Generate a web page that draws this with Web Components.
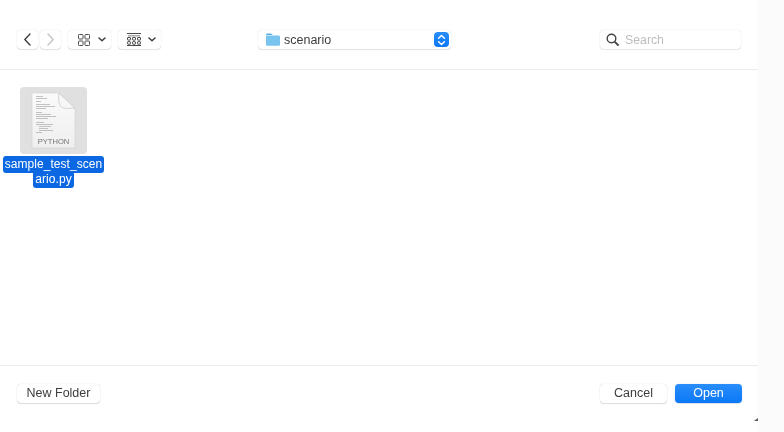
<!DOCTYPE html>
<html>
<head>
<meta charset="utf-8">
<style>
  html, body { margin: 0; padding: 0; width: 784px; height: 432px; overflow: hidden; background: #fff; }
  body { font-family: "Liberation Sans", Arial, sans-serif; color: #3c3c3c; }
</style>
</head>
<body>
<open-dialog></open-dialog>

<template id="tool-button-tpl">
  <style>
    :host {
      display: flex;
      align-items: center;
      justify-content: center;
      gap: var(--gap, 0);
      box-sizing: border-box;
      height: 19px;
      width: var(--w, 20px);
      padding-left: var(--pad, 0);
      background: #fff;
      border-radius: 4px;
      box-shadow: 0 0 1px rgba(0,0,0,.22), 0 1px 1px rgba(0,0,0,.1);
    }
    ::slotted(svg) { display: block; }
  </style>
  <slot></slot>
</template>

<template id="action-button-tpl">
  <style>
    :host {
      display: flex;
      align-items: center;
      justify-content: center;
      box-sizing: border-box;
      height: 19px;
      width: var(--w, 67px);
      padding-bottom: 1px;
      border-radius: 4px;
      background: #fff;
      color: #3d3d3d;
      font: 12.5px "Liberation Sans", Arial, sans-serif;
      box-shadow: 0 0 1px rgba(0,0,0,.24), 0 1px 1px rgba(0,0,0,.12);
    }
    :host([primary]) {
      background: linear-gradient(#2a8dfb, #0a78f5);
      color: #fff;
      box-shadow: 0 0 1px rgba(0,80,200,.4), 0 1px 1px rgba(0,0,0,.1);
    }
  </style>
  <slot></slot>
</template>

<template id="path-popup-tpl">
  <style>
    :host {
      display: flex;
      align-items: center;
      box-sizing: border-box;
      width: 193px;
      height: 19px;
      margin-left: 97px;
      padding: 0 2px 0 8px;
      gap: 4px;
      background: #fff;
      border-radius: 4px;
      box-shadow: 0 0 1px rgba(0,0,0,.22), 0 1px 1px rgba(0,0,0,.1);
      font: 12.5px "Liberation Sans", Arial, sans-serif;
      color: #3d3d3d;
    }
    .name { flex: 1; }
    .stepper {
      width: 15px;
      height: 15px;
      border-radius: 4px;
      background: linear-gradient(#2a8dfb, #0a78f5);
      display: flex;
      align-items: center;
      justify-content: center;
    }
    svg { display: block; }
  </style>
  <svg width="14" height="13" viewBox="0 0 14 13">
    <path d="M0 2.200C0 1.200.6.6 1.500.6h3.200c.7 0 1 .2 1.400.7l.6.8H0z" fill="#5fb0e0"/>
    <path d="M0 2.600h12.600c.8 0 1.400.6 1.400 1.400v7.400c0 .9-.6 1.400-1.400 1.400H1.400C.6 12.800 0 12.300 0 11.400z" fill="#78c4ef"/>
  </svg>
  <span class="name"><slot></slot></span>
  <span class="stepper">
    <svg width="9" height="12" viewBox="0 0 9 12" fill="none" stroke="#fff" stroke-width="1.5" stroke-linecap="round" stroke-linejoin="round">
      <path d="M1.600 4.200 4.500 1.500l2.900 2.700M1.600 7.800l2.900 2.700 2.900-2.700"/>
    </svg>
  </span>
</template>

<template id="search-field-tpl">
  <style>
    :host {
      display: flex;
      align-items: center;
      box-sizing: border-box;
      width: 141px;
      height: 19px;
      margin-left: auto;
      padding-left: 6px;
      gap: 6px;
      background: #fff;
      border-radius: 4px;
      box-shadow: 0 0 1px rgba(0,0,0,.22), 0 1px 1px rgba(0,0,0,.08);
      font: 12.3px "Liberation Sans", Arial, sans-serif;
      color: #bdbdbd;
    }
    svg { display: block; }
  </style>
  <svg width="13" height="13" viewBox="0 0 13 13" fill="none" stroke="#444" stroke-width="1.4" stroke-linecap="round">
    <circle cx="5.500" cy="5.500" r="4.300"/>
    <path d="M8.800 8.800 12 12" stroke-width="1.800"/>
  </svg>
  <slot></slot>
</template>

<template id="file-item-tpl">
  <style>
    :host {
      display: flex;
      flex-direction: column;
      align-items: center;
      width: 103px;
    }
    .thumb {
      width: 67px;
      height: 67px;
      border-radius: 4px;
      background: #e0e0e0;
      display: flex;
      align-items: center;
      justify-content: center;
      margin-bottom: 3px;
    }
    .doc { display: block; }
    .label {
      width: 103px;
      text-align: center;
      word-break: break-all;
      font: 12px/15px "Liberation Sans", Arial, sans-serif;
      letter-spacing: .05px;
      color: #fff;
    }
    .label span {
      background: #0b68e2;
      border-radius: 3px;
      padding: 1px 2px 2px;
      -webkit-box-decoration-break: clone;
      box-decoration-break: clone;
    }
    .tag { font: 7.6px "Liberation Sans", Arial, sans-serif; fill: #757575; }
  </style>
  <div class="thumb">
    <svg class="doc" width="45" height="57" viewBox="0 0 45 57">
      <defs>
        <linearGradient id="sheet" x1="0" y1="0" x2="0" y2="1">
          <stop offset="0" stop-color="#fafafa"/>
          <stop offset="1" stop-color="#efefef"/>
        </linearGradient>
      </defs>
      <path d="M1 1h27l16 15v40H1z" fill="url(#sheet)" stroke="#d0d0d0" stroke-width=".6"/>
      <path d="M28 1c-1 7 0 12 2.500 14 3 2 8 1.500 13.500 1z" fill="#f6f6f6" stroke="#c4c4c4" stroke-width=".7"/>
      <g stroke="#aaa" stroke-width=".7">
        <path d="M5 4.500h7M5 6.500h11M5 9.500h5M5 12.500h14M5 14.500h19M5 16.500h10M5 20.500h6M5 22.500h15M5 24.500h20M5 26.500h12M5 30.500h8M5 32.500h17M8 34.500h12M8 36.500h9M8 38.500h14M5 40.500h6"/>
      </g>
      <text class="tag" x="22.500" y="52" text-anchor="middle">PYTHON</text>
    </svg>
  </div>
  <div class="label"><span><slot></slot></span></div>
</template>

<template id="open-dialog-tpl">
  <style>
    :host {
      display: flex;
      width: 784px;
      height: 432px;
      background: linear-gradient(to right, #fefefe, #fbfbfb);
    }
    .window {
      width: 758px;
      height: 432px;
      background: #fff;
      display: flex;
      flex-direction: column;
      position: relative;
      filter: blur(.3px);
    }
    .toolbar {
      box-sizing: border-box;
      height: 70px;
      padding: 30px 17px 0 17px;
      border-bottom: 1px solid #ececec;
      display: flex;
      align-items: flex-start;
    }
    .nav { display: flex; gap: 2px; }
    .left { display: flex; gap: 7px; }
    .files { flex: 1; padding: 17px 2px 0; }
    .footer {
      box-sizing: border-box;
      height: 67px;
      padding: 18px 16px 0 17px;
      border-top: 1px solid #ececec;
      display: flex;
      justify-content: space-between;
      align-items: flex-start;
    }
    .actions { display: flex; gap: 8px; }
    .grip { position: absolute; right: 0; bottom: 11px; }
    svg { display: block; }
  </style>
  <div class="window">
    <div class="toolbar">
      <div class="left">
        <div class="nav">
          <tool-button style="--w:21px">
            <svg width="9" height="13" viewBox="0 0 9 13" fill="none" stroke="#3f3f3f" stroke-width="1.4" stroke-linecap="round" stroke-linejoin="round"><path d="M7 1 1.800 6.500 7 12"/></svg>
          </tool-button>
          <tool-button style="--w:21px">
            <svg width="9" height="13" viewBox="0 0 9 13" fill="none" stroke="#c4c4c4" stroke-width="1.4" stroke-linecap="round" stroke-linejoin="round"><path d="M2 1l5.200 5.500L2 12"/></svg>
          </tool-button>
        </div>
        <tool-button style="--w:43px;--gap:8px;--pad:4px">
          <svg width="12" height="12" viewBox="0 0 12 12" fill="none" stroke="#4a4a4a" stroke-width="1"><rect x=".5" y=".5" width="4.500" height="4.500" rx=".8"/><rect x="7" y=".5" width="4.500" height="4.500" rx=".8"/><rect x=".5" y="7" width="4.500" height="4.500" rx=".8"/><rect x="7" y="7" width="4.500" height="4.500" rx=".8"/></svg>
          <svg width="8" height="5" viewBox="0 0 8 5" fill="none" stroke="#3f3f3f" stroke-width="1.500" stroke-linecap="round" stroke-linejoin="round"><path d="M1 1l3 2.800L7 1"/></svg>
        </tool-button>
        <tool-button style="--w:43px;--gap:7px;--pad:3px">
          <svg width="14" height="13" viewBox="0 0 14 13" fill="none" stroke="#4a4a4a" stroke-width="1"><path d="M0 .5h14M0 12.500h14"/><path d="M1 2h12v1.500H1z" fill="#aaa" stroke="none"/><rect x=".5" y="4.500" width="3" height="2.600" rx=".5"/><rect x="5.500" y="4.500" width="3" height="2.600" rx=".5"/><rect x="10.500" y="4.500" width="3" height="2.600" rx=".5"/><rect x=".5" y="8.700" width="3" height="2.500" rx=".5"/><rect x="5.500" y="8.700" width="3" height="2.500" rx=".5"/><rect x="10.500" y="8.700" width="3" height="2.500" rx=".5"/></svg>
          <svg width="8" height="5" viewBox="0 0 8 5" fill="none" stroke="#3f3f3f" stroke-width="1.500" stroke-linecap="round" stroke-linejoin="round"><path d="M1 1l3 2.800L7 1"/></svg>
        </tool-button>
      </div>
      <path-popup>scenario</path-popup>
      <search-field>Search</search-field>
    </div>
    <div class="files">
      <file-item>sample_test_scenario.py</file-item>
    </div>
    <div class="footer">
      <action-button style="--w:83px">New Folder</action-button>
      <div class="actions">
        <action-button>Cancel</action-button>
        <action-button primary>Open</action-button>
      </div>
    </div>
    <svg class="grip" width="4" height="3" viewBox="0 0 4 3"><path d="M4 0v3H0z" fill="#555"/></svg>
  </div>
</template>

<script>
  // small helper so every element clones its own template into an open shadow root
  function defineFromTemplate(tag, templateId) {
    customElements.define(tag, class extends HTMLElement {
      constructor() {
        super();
        this.attachShadow({ mode: 'open' });
        const tpl = document.getElementById(templateId);
        this.shadowRoot.appendChild(tpl.content.cloneNode(true));
      }
    });
  }

  defineFromTemplate('tool-button', 'tool-button-tpl');
  defineFromTemplate('action-button', 'action-button-tpl');
  defineFromTemplate('path-popup', 'path-popup-tpl');
  defineFromTemplate('search-field', 'search-field-tpl');
  defineFromTemplate('file-item', 'file-item-tpl');
  defineFromTemplate('open-dialog', 'open-dialog-tpl');
</script>
</body>
</html>
